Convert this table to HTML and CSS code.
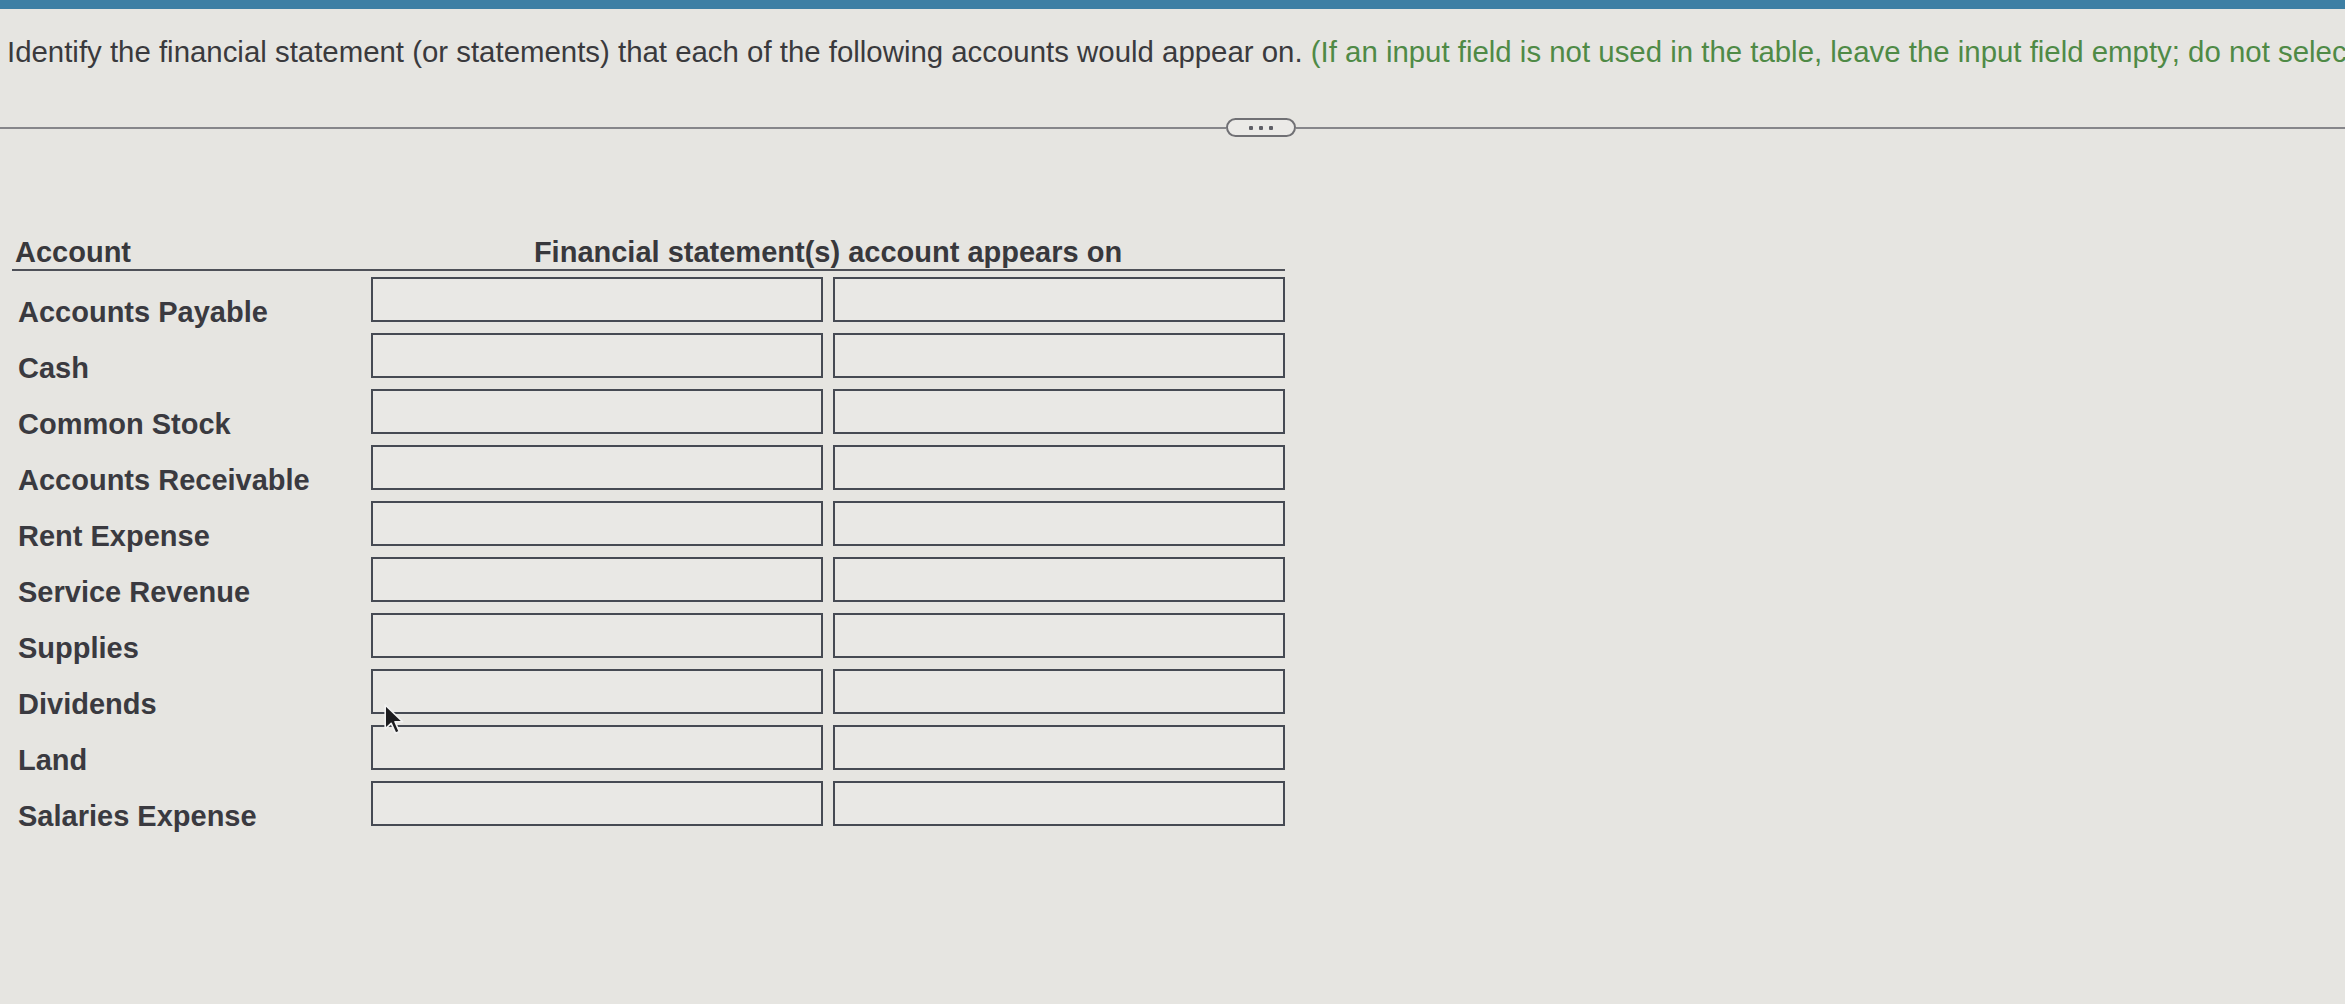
FILE: index.html
```html
<!DOCTYPE html>
<html lang="en">
<head>
<meta charset="utf-8">
<title>Financial statements</title>
<link rel="stylesheet" href="styles.css">
</head>
<body>
<div class="topbar"></div>
<p class="prompt">Identify the financial statement (or statements) that each of the following accounts would appear on. <span class="note">(If an input field is not used in the table, leave the input field empty; do not select a label or enter a zero.)</span></p>
<div class="divider">
  <div class="rule rule-left"></div>
  <button class="more" type="button"><span class="dot"></span><span class="dot"></span><span class="dot"></span></button>
  <div class="rule rule-right"></div>
</div>
<div class="table">
  <div class="head head-account">Account</div>
  <div class="head head-fs">Financial statement(s) account appears on</div>

  <div class="label">Accounts Payable</div><div class="field"></div><div class="field"></div>
  <div class="label">Cash</div><div class="field"></div><div class="field"></div>
  <div class="label">Common Stock</div><div class="field"></div><div class="field"></div>
  <div class="label">Accounts Receivable</div><div class="field"></div><div class="field"></div>
  <div class="label">Rent Expense</div><div class="field"></div><div class="field"></div>
  <div class="label">Service Revenue</div><div class="field"></div><div class="field"></div>
  <div class="label">Supplies</div><div class="field"></div><div class="field"></div>
  <div class="label">Dividends</div><div class="field"></div><div class="field"></div>
  <div class="label">Land</div><div class="field"></div><div class="field"></div>
  <div class="label">Salaries Expense</div><div class="field"></div><div class="field"></div>
</div>
<svg class="cursor" width="24" height="34" viewBox="0 0 22 30" aria-hidden="true">
  <path d="M2 2 L2 24 L7.5 19 L11.5 28 L15 26.5 L11 17.5 L18 17.5 Z" fill="#1c1c1f" stroke="#f2f2f2" stroke-width="1.5" stroke-linejoin="round"/>
</svg>
</body>
</html>
```
FILE: styles.css
```css
html, body {
  margin: 0;
  padding: 0;
}
body {
  background: #e6e5e1;
  font-family: "Liberation Sans", Arial, sans-serif;
  color: #38383c;
  width: 2345px;
  height: 1004px;
  overflow: hidden;
  position: relative;
}
.topbar {
  height: 9px;
  background: #3d7fa4;
}
.prompt {
  margin: 26px 0 0 7px;
  font-size: 29.4px;
  line-height: 34px;
  white-space: nowrap;
  overflow: hidden;
  color: #3a3a3d;
}
.note {
  color: #4f8a46;
}
.divider {
  display: flex;
  align-items: center;
  margin-top: 49px;
  height: 19px;
}
.rule {
  height: 2px;
  background: #86868a;
}
.rule-left {
  width: 1226px;
}
.rule-right {
  flex: 1;
}
.more {
  width: 70px;
  height: 19px;
  box-sizing: border-box;
  border: 2px solid #707074;
  border-radius: 10px;
  background: #ebeae7;
  padding: 0;
  display: flex;
  align-items: center;
  justify-content: center;
  gap: 6px;
}
.dot {
  width: 4px;
  height: 4px;
  background: #5f5f66;
  border-radius: 1px;
}
.table {
  margin: 84px 0 0 12px;
  width: 1273px;
  display: grid;
  grid-template-columns: 349px 452px 452px;
  column-gap: 10px;
  grid-auto-rows: 45px;
  row-gap: 11px;
}
.head {
  font-weight: bold;
  font-size: 29px;
  line-height: 33px;
  height: 33px;
  border-bottom: 2px solid #4e5058;
  color: #38383c;
}
.head-account {
  padding-left: 3px;
  margin-right: -10px;
  align-self: end;
  margin-bottom: -5px;
}
.head-fs {
  grid-column: 2 / 4;
  text-align: center;
  align-self: end;
  margin-bottom: -5px;
}
.label {
  font-weight: bold;
  font-size: 29px;
  line-height: 33px;
  padding: 19px 0 0 6px;
  white-space: nowrap;
  color: #3a3a40;
}
.field {
  box-sizing: border-box;
  border: 2px solid #464a53;
  background: #e9e8e5;
}
.cursor {
  position: absolute;
  left: 383px;
  top: 702px;
}
```
